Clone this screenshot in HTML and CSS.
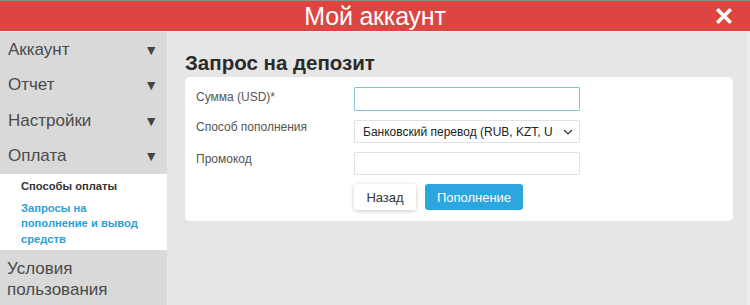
FILE: index.html
```html
<!DOCTYPE html>
<html lang="ru">
<head>
<meta charset="utf-8">
<title>Мой аккаунт</title>
<link rel="stylesheet" href="styles.css">
</head>
<body>
<div class="app">
  <header class="topbar">
    <h1 class="topbar-title">Мой аккаунт</h1>
    <button class="close" aria-label="Закрыть">
      <svg width="16" height="16" viewBox="0 0 16 16"><path d="M2.5 2.5 L13.5 13.5 M13.5 2.5 L2.5 13.5" stroke="#fff" stroke-width="3.6" stroke-linecap="square"/></svg>
    </button>
  </header>
  <div class="body">
    <nav class="sidebar">
      <div class="nav-item"><span>Аккаунт</span><span class="arrow">▼</span></div>
      <div class="nav-item"><span>Отчет</span><span class="arrow">▼</span></div>
      <div class="nav-item"><span>Настройки</span><span class="arrow">▼</span></div>
      <div class="nav-item"><span>Оплата</span><span class="arrow">▼</span></div>
      <div class="submenu">
        <div class="sub-item">Способы оплаты</div>
        <div class="sub-item active">Запросы на пополнение и вывод средств</div>
      </div>
      <div class="nav-item tall"><span>Условия пользования</span></div>
    </nav>
    <main class="content">
      <h2 class="page-title">Запрос на депозит</h2>
      <div class="card">
        <div class="row">
          <label class="label first">Сумма (USD)*</label>
          <input class="field focused" type="text">
        </div>
        <div class="row">
          <label class="label">Способ пополнения</label>
          <div class="field select"><span class="select-text">Банковский перевод (RUB, KZT, U</span>
            <svg class="chev" width="10" height="6" viewBox="0 0 10 6"><path d="M1 1 L5 5 L9 1" fill="none" stroke="#333" stroke-width="1.2"/></svg>
          </div>
        </div>
        <div class="row">
          <label class="label">Промокод</label>
          <input class="field" type="text">
        </div>
        <div class="actions">
          <button class="btn btn-back">Назад</button>
          <button class="btn btn-primary">Пополнение</button>
        </div>
      </div>
    </main>
  </div>
</div>
</body>
</html>
```
FILE: styles.css
```css
* { box-sizing: border-box; }
html, body { margin: 0; padding: 0; }
body {
  width: 750px;
  height: 305px;
  overflow: hidden;
  font-family: "Liberation Sans", Arial, sans-serif;
  background: #e6e6e6;
}
.app { display: flex; flex-direction: column; height: 305px; }
.topbar {
  height: 32px;
  background: #dc4540;
  border-top: 1px solid #8d8d8d;
  border-bottom: 1px solid #efefef;
  display: flex;
  align-items: center;
  justify-content: center;
  position: relative;
}
.topbar-title {
  margin: 0;
  color: #fff;
  font-family: "Liberation Sans Narrow", "Liberation Sans", sans-serif;
  font-weight: normal;
  font-size: 25px;
  line-height: 30px;
  letter-spacing: -0.2px;
}
.close {
  position: absolute;
  right: 18px;
  top: 7px;
  width: 16px;
  height: 16px;
  padding: 0;
  border: 0;
  background: none;
  display: flex;
}
.body { display: flex; flex: 1; }
.sidebar {
  width: 167px;
  background: #d9d9d9;
  color: #4a4a4a;
  display: flex;
  flex-direction: column;
}
.nav-item {
  height: 35.5px;
  padding: 0 9px 0 8px;
  display: flex;
  align-items: center;
  justify-content: space-between;
  font-size: 17px;
}
.nav-item.tall {
  height: auto;
  padding: 8px 0 0 7px;
  line-height: 21px;
  width: 120px;
}
.arrow { font-size: 14px; color: #444; }
.submenu {
  background: #fff;
  padding: 4px 0 2px 21px;
  font-size: 11.2px;
  font-weight: bold;
}
.sub-item { color: #333; line-height: 15.5px; padding: 1px 0; }
.sub-item.active { color: #2a9fd6; margin-top: 4px; width: 124px; }
.content {
  flex: 1;
  padding: 0 14px 0 18px;
  border-right: 3px solid #ececec;
}
.page-title {
  margin: 0;
  padding-top: 18px;
  font-size: 20.5px;
  line-height: 26px;
  color: #2b2b2b;
  font-weight: bold;
}
.card {
  background: #fff;
  border-radius: 5px;
  margin-top: 1px;
  padding: 10px 11px 11px 11px;
  display: flex;
  flex-direction: column;
  gap: 9px;
}
.row { display: flex; align-items: flex-start; }
.label {
  width: 158px;
  font-size: 12px;
  color: #555;
  padding-top: 0;
}
.label.first { padding-top: 3px; }
.field {
  width: 226px;
  height: 23px;
  border: 1px solid #e2e2e2;
  border-radius: 1px;
  background: #fff;
  margin: 0;
  font: inherit;
}
.field.focused { border: 1px solid #7ec8d8; height: 24px; }
.select {
  display: flex;
  align-items: center;
  justify-content: space-between;
  padding: 0 6px 0 8px;
  font-size: 12px;
  color: #222;
}
.select-text { white-space: nowrap; overflow: hidden; }
.actions { display: flex; gap: 9px; margin-left: 158px; }
.btn {
  height: 26px;
  border: 0;
  border-radius: 3px;
  font-family: inherit;
  font-size: 13px;
  cursor: pointer;
}
.btn-back {
  width: 62px;
  background: #fff;
  color: #333;
  box-shadow: 0 1px 4px rgba(0,0,0,0.22);
}
.btn-primary {
  width: 98px;
  background: #2ba6de;
  color: #fff;
}
```
